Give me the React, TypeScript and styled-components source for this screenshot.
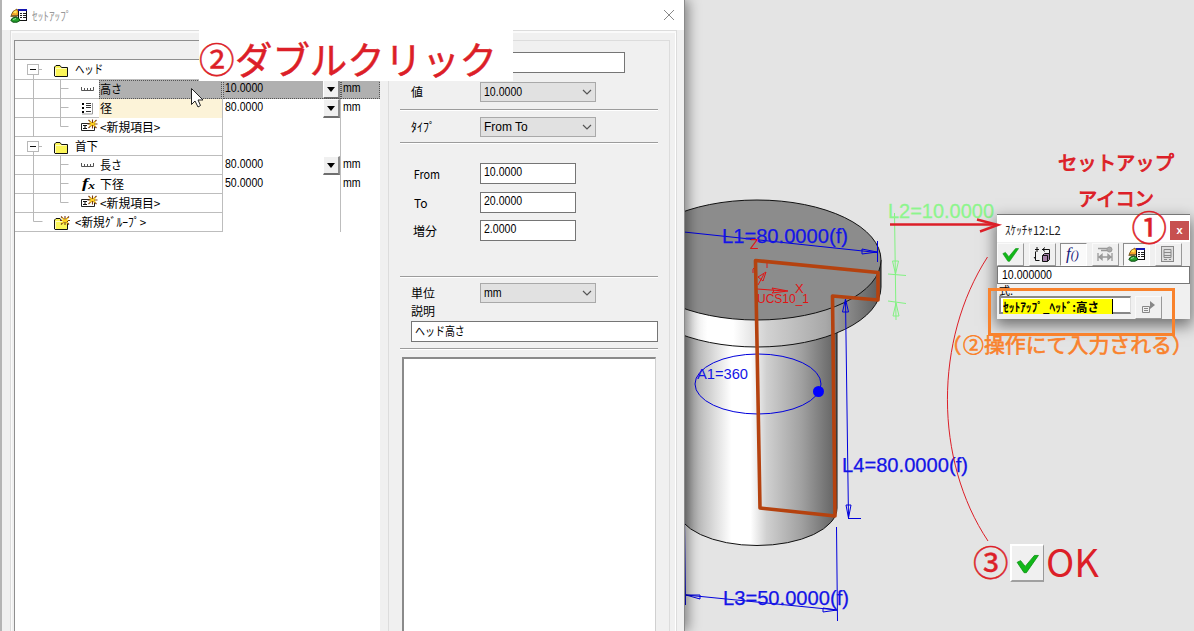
import React from "react";
import styled, { createGlobalStyle } from "styled-components";

const UI = `"Liberation Sans", "Noto Sans CJK JP", sans-serif`;
const JP = `"Noto Sans CJK JP", sans-serif`;
const RED = "#dc1f28";
const BLUE = "#1414e6";
const ORANGE = "#f9822c";

const GlobalStyle = createGlobalStyle`
  * { box-sizing: border-box; }
  body { margin: 0; font-family: ${UI}; font-size: 12px; color: #000; }
`;

const Desktop = styled.div`
  position: relative;
  display: flex;
  width: 1194px;
  height: 631px;
  overflow: hidden;
  background: #e4e4e4;
`;

const Dialog = styled.section`
  position: relative;
  z-index: 1;
  display: flex;
  flex-direction: column;
  flex: none;
  width: 685px;
  height: 631px;
  border-left: 2px solid #b4b4b4;
  border-right: 1px solid #8a8a8a;
  background: #f0f0f0;
  box-shadow: 3px 0 12px rgba(0, 0, 0, 0.45);
`;

const TitleBar = styled.header`
  display: flex;
  align-items: center;
  justify-content: space-between;
  flex: none;
  height: 30px;
  padding: 0 9px 0 8px;
  background: #fff;
`;

const TitleText = styled.div`
  display: flex;
  align-items: center;
  gap: 5px;
  color: #999;
`;

const Fit = styled.span<{ $scale?: number }>`
  display: inline-block;
  white-space: pre;
  transform: scaleX(${(p) => p.$scale ?? 1});
  transform-origin: left center;
`;

const Body = styled.div`
  display: flex;
  flex: 1;
  margin: 0 7px 0 8px;
  padding: 4px 0 0 3px;
  border: 1px solid #dcdcdc;
  border-bottom: 0;
  box-shadow: inset 1px 0 0 #fafafa, inset 0 2px 0 #fafafa, inset -1px 0 0 #fff;
`;

const TreePane = styled.div`
  display: flex;
  flex-direction: column;
  width: 366px;
  margin-top: 5px;
  border: 1px solid #8f8f8f;
  border-right: 0;
  border-bottom: 0;
  background: #fff;
`;

const TreeHeader = styled.div`
  height: 19px;
  border-bottom: 1px solid #8f8f8f;
  background: #f0f0f0;
`;

const TreeRow = styled.div<{ $first?: boolean }>`
  display: grid;
  grid-template-columns: 208px 118px 1fr;
  height: ${(p) => (p.$first ? 20 : 19)}px;
  border-bottom: 1px solid #bdbdbd;
`;

const NameCell = styled.div`
  display: flex;
  border-right: 1px solid #bdbdbd;
`;

const Cell = styled.div<{ $selected?: boolean; $last?: boolean }>`
  display: flex;
  justify-content: space-between;
  padding-left: 2px;
  line-height: 16px;
  border-right: ${(p) => (p.$last ? "0" : "1px solid #bdbdbd")};
  background: ${(p) => (p.$selected ? "#b0b0b0" : "#fff")};
  outline: ${(p) => (p.$selected ? "1px dotted #555" : "0")};
  outline-offset: -1px;
`;

const Label = styled.div<{ $fill?: string; $selected?: boolean }>`
  flex: 1;
  padding-left: 1px;
  font: 12px/17px ${JP};
  white-space: nowrap;
  background: ${(p) => p.$fill ?? "transparent"};
  outline: ${(p) => (p.$selected ? "1px dotted #555" : "0")};
  outline-offset: -1px;
`;

const DropButton = styled.button`
  display: grid;
  place-items: center;
  width: 17px;
  height: 19px;
  padding: 0;
  border: 1px solid #fff;
  border-right: 2px solid #8c8c8c;
  border-bottom: 2px solid #6e6e6e;
  background: #f0f0f0;
`;

const Group = styled.div`
  display: flex;
  flex-direction: column;
  width: 282px;
  margin: 5px 0 0 8px;
  padding-left: 11px;
  border: 1px solid #dcdcdc;
  border-bottom: 0;
`;

const Field = styled.div<{ $top: number; $inset?: number }>`
  display: grid;
  grid-template-columns: 69px auto;
  align-items: center;
  justify-content: start;
  margin-top: ${(p) => p.$top}px;
  padding-left: 11px;
  font: 12px/16px ${JP};
  > :first-child {
    padding-left: ${(p) => p.$inset ?? 0}px;
  }
`;

const Rule = styled.div<{ $top: number }>`
  flex: none;
  width: 258px;
  height: 2px;
  margin-top: ${(p) => p.$top}px;
  border-top: 1px solid #9c9c9c;
  background: #fff;
`;

const TextBox = styled.div<{ $width: number }>`
  width: ${(p) => p.$width}px;
  height: 21px;
  padding: 0 3px;
  border: 1px solid #757575;
  background: #fff;
  font: 12px/17px ${UI};
`;

const Select = styled.div`
  display: flex;
  align-items: center;
  justify-content: space-between;
  width: 116px;
  height: 20px;
  padding: 0 3px;
  border: 1px solid #a9a9a9;
  background: #e1e1e1;
  font: 12px/18px ${UI};
`;

const Caption = styled.div`
  height: 14px;
  margin-top: 1px;
  padding-left: 11px;
  font: 12px/14px ${JP};
`;

const Description = styled(TextBox)`
  margin: 3px 0 0 11px;
  font-family: ${JP};
  line-height: 17px;
`;

const ListBox = styled.div`
  flex: 1;
  width: 254px;
  margin: 7px 0 0 2px;
  border: 2px solid #8a8a8a;
  border-right: 1px solid #d0d0d0;
  border-bottom: 0;
  background: #fff;
`;

const Scene = styled.svg`
  position: absolute;
  inset: 0;
  font-family: ${UI};
`;

const Sketcher = styled.section`
  position: absolute;
  z-index: 1;
  left: 997px;
  top: 214px;
  display: flex;
  flex-direction: column;
  width: 193px;
  height: 105px;
  overflow: hidden;
  border-top: 1px solid #777;
  background: #f0f0f0;
`;

const SketcherShade = styled.div`
  position: absolute;
  left: 997px;
  top: 216px;
  width: 193px;
  height: 103px;
  box-shadow: 0 5px 14px 2px rgba(0, 0, 0, 0.5);
`;

const SketcherTitle = styled.header`
  display: flex;
  align-items: center;
  justify-content: space-between;
  height: 29px;
  padding: 4px 1px 0 8px;
  background: #fff;
  font: 12px/20px ${JP};
  color: #222;
`;

const CloseButton = styled.button`
  width: 19px;
  height: 19px;
  margin-top: 1px;
  padding: 0 0 2px;
  border: 0;
  background: #c75050;
  color: #fff;
  font: bold 11px/16px ${UI};
`;

const Tools = styled.div`
  display: flex;
  gap: 4.6px;
  height: 25px;
  padding: 1px 0 0;
`;

const Tool = styled.button<{ $pressed?: boolean }>`
  display: grid;
  place-items: center;
  width: 27px;
  height: 23px;
  padding: 0;
  border: 1px solid;
  border-color: ${(p) => (p.$pressed ? "#8c8c8c #fff #fff #8c8c8c" : "#fafafa #999 #999 #fafafa")};
  background: ${(p) => (p.$pressed ? "#fafafa" : "#f0f0f0")};
`;

const ValueBox = styled.div`
  height: 20px;
  padding: 0 4px;
  border: 1px solid #777;
  background: #fff;
  font: 12px/16px ${UI};
`;

const FormulaCaption = styled.div`
  height: 12px;
  padding: 0 2px;
  font: 11px/13px ${JP};
`;

const FormulaRow = styled.div`
  display: flex;
  gap: 4px;
  padding-left: 2px;
`;

const FormulaBox = styled.div`
  width: 132px;
  height: 18px;
  padding: 1px 2px;
  border: 2px solid #888;
  border-right: 1px solid #ddd;
  background: #fff;
  font: bold 12px/15px ${JP};
`;

const Marked = styled.div`
  width: 110px;
  height: 15px;
  border-right: 1px solid #000;
  background: #ffff00;
`;

const NoteBackdrop = styled.div`
  position: absolute;
  z-index: 2;
  left: 199px;
  top: 29px;
  width: 314px;
  height: 52px;
  background: #fff;
`;

const Notes = styled.svg`
  position: absolute;
  z-index: 3;
  inset: 0;
  font-family: ${JP};
`;

const OkButton = styled.div`
  position: absolute;
  z-index: 2;
  left: 1010px;
  top: 544px;
  display: grid;
  place-items: center;
  width: 34px;
  height: 38px;
  border: 2px solid #fff;
  border-right: 1px solid #999;
  border-bottom: 2px solid #a0a0a0;
  background: #f0f0f0;
`;

const SetupIcon = ({ w = 17, h = 15 }: { w?: number; h?: number }) => (
  <svg width={w} height={h} viewBox="0 0 17 15">
    <path d="M0.5 8.5h7M1 7.5 3 3.5 7 1l2 3.5-1 3z" fill="#f5a52a" stroke="#6b4a10" strokeWidth=".8" />
    <path d="M3 4.5l2-2 2 1-1 2z" fill="#ffe95a" />
    <rect x="8.5" y="1.5" width="8" height="11" fill="#fff" stroke="#111" />
    <path d="M8 2h9" stroke="#1616b0" strokeWidth="2" />
    <path d="M10 5.5h2M13 5.5h3M10 7.5h2M13 7.5h3M10 9.5h2M13 9.5h3" stroke="#222" />
    <path d="M.8 12.5 2.5 10 6 9l3 1.5 1 2-3 1.7H3z" fill="#25a02c" stroke="#0a4c10" />
    <path d="M3 11.5l3-1" stroke="#9fe39a" />
  </svg>
);

const FolderIcon = ({ star }: { star?: boolean }) => (
  <svg width="18" height="15" viewBox="0 0 18 15">
    <path d="M1.5 13V4L3 2.5h4L8.500 4.500H14.500V13.500H2z" fill="#fbf558" stroke="#111" />
    <path d="M2.500 13V5.500H13.500" fill="none" stroke="#fffcc0" />
    {star && <Spark x={12} y={4.5} />}
  </svg>
);

const Spark = ({ x, y }: { x: number; y: number }) => (
  <g transform={`translate(${x} ${y})`}>
    <path d="M-4-4 4 4M4-4-4 4M0-4.500V4.500M-5 0H5" stroke="#7a3b10" strokeWidth="1.100" />
    <path d="M-3-2.500 3 2.500M3-2.500-3 2.500M-3 0H3" stroke="#ffd21e" strokeWidth="1.200" />
  </g>
);

const ItemIcon = ({ kind }: { kind: string }) => (
  <svg width="20" height="18" viewBox="0 0 20 18">
    {kind === "ruler" && <path d="M2.500 7v3.500H14.500V7M5.500 8v2M8.500 8v2M11.500 8v2" fill="none" stroke="#555" />}
    {kind === "list" && (
      <>
        <path d="M3 5h2M3 9h2M3 13h2" stroke="#000" strokeWidth="2" />
        <path d="M7 4.500h5M7 6.500h5M7 8.500h5M7 12.500h5" stroke="#333" />
        <path d="M13.500 4v11H3" fill="none" stroke="#999" />
      </>
    )}
    {kind === "fx" && (
      <text x="3" y="13" fontFamily="Liberation Serif, serif" fontStyle="italic" fontWeight="bold" fontSize="14" textLength="13" lengthAdjust="spacingAndGlyphs">
        f<tspan fontSize="10" dy="1">x</tspan>
      </text>
    )}
    {kind === "new" && (
      <>
        <path d="M2.500 5.500H15.500V12.500H2.500z" fill="#fff" stroke="#222" />
        <path d="M4 7.500h4M6 7.500v3M4 10.500h4" stroke="#111" />
        <Spark x={13.5} y={6} />
      </>
    )}
  </svg>
);

const Check = ({ size = 18 }: { size?: number }) => (
  <svg width={size} height={size} viewBox="0 0 20 20">
    <path d="M1 9l3-1.500 4 5L16 3h3.500L9 18H7z" fill="#10b818" stroke="#0b9010" strokeWidth=".7" />
  </svg>
);

const Guide = ({ kind }: { kind: "group" | "item" | "last" | "end"; }) => (
  <svg width={kind === "group" || kind === "end" ? 38 : 64} height="19" viewBox={`0 0 ${kind === "group" || kind === "end" ? 38 : 64} 19`}>
    <g fill="none" stroke="#b8b8b8">
      {kind === "group" && (
        <>
          <path d="M18.500 15v4M24 9.500h3" />
          <rect x="12.500" y="4.500" width="11" height="10" />
          <path d="M15 9.500h6" stroke="#111" />
        </>
      )}
      {kind === "item" && <path d="M18.500 0v19M45.500 0v19M45.500 8.500h8" />}
      {kind === "last" && <path d="M18.500 0v19M45.500 0v8.500h8" />}
      {kind === "end" && <path d="M18.500 0v8.500h9" />}
    </g>
  </svg>
);

const Chevron = () => (
  <svg width="10" height="6" viewBox="0 0 10 6">
    <path d="M1 1l4 4 4-4" fill="none" stroke="#555" strokeWidth="1.200" />
  </svg>
);

type Row = { guide: "group" | "item" | "last" | "end"; icon: string; label: string; value?: string; drop?: boolean; fill?: string; selected?: boolean; scale?: number };

const rows: Row[] = [
  { guide: "group", icon: "folder", label: "ヘッド", scale: 0.78 },
  { guide: "item", icon: "ruler", label: "高さ", value: "10.0000", drop: true, fill: "#b0b0b0", selected: true, scale: 0.92 },
  { guide: "item", icon: "list", label: "径", value: "80.0000", drop: true, fill: "#fcf3d8" },
  { guide: "last", icon: "new", label: "<新規項目>", scale: 0.985 },
  { guide: "group", icon: "folder", label: "首下", scale: 0.96 },
  { guide: "item", icon: "ruler", label: "長さ", value: "80.0000", drop: true, scale: 0.92 },
  { guide: "item", icon: "fx", label: "下径", value: "50.0000" },
  { guide: "last", icon: "new", label: "<新規項目>", scale: 0.985 },
  { guide: "end", icon: "newFolder", label: "<新規グループ>", scale: 0.97 },
];

const halfWidth: Record<string, string> = { "<新規グループ>": "<新規ｸﾞﾙｰﾌﾟ>" };

function SetupTree() {
  return (
    <TreePane>
      <TreeHeader />
      {rows.map((r, i) => (
        <TreeRow key={i} $first={i === 0}>
          <NameCell>
            <Guide kind={r.guide} />
            {r.icon === "folder" || r.icon === "newFolder" ? (
              <svg width="21" height="18" viewBox="0 -3 21 18">
                <FolderIcon star={r.icon === "newFolder"} />
              </svg>
            ) : (
              <ItemIcon kind={r.icon} />
            )}
            <Label $fill={r.fill} $selected={r.selected}>
              <Fit $scale={r.scale}>{halfWidth[r.label] ?? r.label}</Fit>
            </Label>
          </NameCell>
          <Cell $selected={r.selected}>
            <Fit $scale={0.88}>{r.value ?? ""}</Fit>
            {r.drop && (
              <DropButton>
                <svg width="8" height="5" viewBox="0 0 8 5">
                  <path d="M0 0h8L4 5z" />
                </svg>
              </DropButton>
            )}
          </Cell>
          <Cell $selected={r.selected} $last>
            <Fit $scale={0.88}>{r.value ? "mm" : ""}</Fit>
          </Cell>
        </TreeRow>
      ))}
    </TreePane>
  );
}

function PropertyForm() {
  return (
    <Group>
      <Field $top={11}>
        <span />
        <TextBox $width={145} />
      </Field>
      <Field $top={9}>
        <span>値</span>
        <Select><Fit $scale={0.88}>10.0000</Fit><Chevron /></Select>
      </Field>
      <Rule $top={7} />
      <Field $top={6}>
        <span>ﾀｲﾌﾟ</span>
        <Select><Fit>From To</Fit><Chevron /></Select>
      </Field>
      <Rule $top={5} />
      <Field $top={19} $inset={3}>
        <Fit $scale={0.9}>From</Fit>
        <TextBox $width={96}><Fit $scale={0.88}>10.0000</Fit></TextBox>
      </Field>
      <Field $top={8} $inset={3}>
        <span>To</span>
        <TextBox $width={96}><Fit $scale={0.88}>20.0000</Fit></TextBox>
      </Field>
      <Field $top={7} $inset={2}>
        <span>増分</span>
        <TextBox $width={96}><Fit $scale={0.88}>2.0000</Fit></TextBox>
      </Field>
      <Rule $top={35} />
      <Field $top={5}>
        <span>単位</span>
        <Select><Fit $scale={0.88}>mm</Fit><Chevron /></Select>
      </Field>
      <Caption>説明</Caption>
      <Description $width={247}><Fit $scale={0.83}>ヘッド高さ</Fit></Description>
      <Rule $top={6} />
      <ListBox />
    </Group>
  );
}

function Model() {
  const fit = { lengthAdjust: "spacingAndGlyphs" as const };
  return (
    <Scene width="1194" height="631" viewBox="0 0 1194 631">
      <defs>
        <linearGradient id="shaft" gradientUnits="userSpaceOnUse" x1="677" x2="837" y1="0" y2="0">
          <stop offset="0" stopColor="#808080" />
          <stop offset=".1" stopColor="#adadad" />
          <stop offset=".24" stopColor="#dedede" />
          <stop offset=".34" stopColor="#fff" />
          <stop offset=".46" stopColor="#fff" />
          <stop offset=".56" stopColor="#d0d0d0" />
          <stop offset=".78" stopColor="#a0a0a0" />
          <stop offset="1" stopColor="#606060" />
        </linearGradient>
        <linearGradient id="rim" gradientUnits="userSpaceOnUse" x1="684" x2="881" y1="0" y2="0">
          <stop offset="0" stopColor="#e0e0e0" />
          <stop offset=".12" stopColor="#fff" />
          <stop offset=".25" stopColor="#fff" />
          <stop offset=".42" stopColor="#d2d2d2" />
          <stop offset=".72" stopColor="#a8a8a8" />
          <stop offset=".9" stopColor="#777" />
          <stop offset="1" stopColor="#5c5c5c" />
        </linearGradient>
      </defs>
      <path d="M677 310V508A80 37.500 0 0 0 837 508V310z" fill="url(#shaft)" stroke="#111" />
      <path d="M633 260V287A124 60 0 0 0 881 287V260z" fill="url(#rim)" stroke="#111" />
      <ellipse cx="757" cy="260" rx="124" ry="60" fill="#8c8c8c" stroke="#111" />
      <g fill="none" stroke="#0000dc">
        <path d="M684 232 877 252.500M877.500 241v21M877 252l-15-3v5z" />
        <ellipse cx="758" cy="384" rx="63" ry="30" />
        <path d="M845.500 300 848.500 518M845.500 299l-3 13h6zM848.500 518l-2.500-13h5zM848 518.500h13" />
        <path d="M684.500 519 685.500 605M836.500 527 837.500 621M686 595 837 610M686 595l14 0v4zM837 610l-14-2v4z" />
      </g>
      <circle cx="818.500" cy="391.500" r="5.500" fill="#0000ff" />
      <g fill={BLUE} stroke={BLUE} strokeWidth=".25" fontSize="20">
        <text x="722" y="243" textLength="126" {...fit}>L1=80.0000(f)</text>
        <text x="842" y="472" textLength="126" {...fit}>L4=80.0000(f)</text>
        <text x="723" y="605" textLength="126" {...fit}>L3=50.0000(f)</text>
        <text x="697" y="379" fontSize="15" strokeWidth="0" textLength="51" {...fit}>A1=360</text>
      </g>
      <g fill="none" stroke="#e01414">
        <path d="M757 289 785 291M788 291l-16-3 2 3-2 2zM758 285l6-11M766 272l-8 5 5 4zM753 273q-1-5 2-6M767 268v-5" />
      </g>
      <g fill="#e01414" fontSize="13">
        <text x="750" y="249" fontSize="14">Z</text>
        <text x="795" y="293">X</text>
        <text x="757" y="303" textLength="52" {...fit}>UCS10_1</text>
      </g>
      <path d="M755.500 260.500 878 272.500V300L832.500 296 835 516 760 508z" fill="none" stroke="#b5420f" strokeWidth="3.600" strokeLinejoin="round" />
      <g fill="none" stroke="#82f282">
        <path d="M894.500 213 896 320M895.500 274l-3-13h6zM896 303l-3 13h6zM888 274l18 1.500M888 301l18 2.500" />
      </g>
      <text x="888" y="218" fontSize="20" fill="#8df58d" stroke="#8df58d" strokeWidth=".3" textLength="106" {...fit}>L2=10.0000</text>
    </Scene>
  );
}

function SketcherWindow() {
  return (
    <Sketcher>
      <SketcherTitle>
        <Fit $scale={0.93}>ｽｹｯﾁｬ12:L2</Fit>
        <CloseButton>x</CloseButton>
      </SketcherTitle>
      <Tools>
        <Tool><Check size={17} /></Tool>
        <Tool>
          <svg width="18" height="17" viewBox="0 0 18 17" fill="none" stroke="#111">
            <path d="M2 3.500h4M4 1v5M2.500 5.500v9h4M9 3.500h7.500v4M1 11l1.500 2M12 1.500 9.500 3.500 12 5.500" />
            <path d="M9.500 9.500l2-2h5v6l-2 2h-5zM9.500 9.500h5v6" fill="#a580a8" />
          </svg>
        </Tool>
        <Tool $pressed>
          <svg width="20" height="18" viewBox="0 0 20 18">
            <text x="2" y="14" fill="#171779" fontFamily="Liberation Serif, serif" fontStyle="italic" fontSize="17">
              f<tspan fontSize="12">()</tspan>
            </text>
          </svg>
        </Tool>
        <Tool>
          <svg width="18" height="16" viewBox="0 0 18 16" fill="none" stroke="#999">
            <path d="M2 2.500h9M5 4.500h6" strokeWidth="1.500" />
            <circle cx="13.500" cy="3.500" r="2.500" fill="#aaa" />
            <path d="M2 7v8M16 7v8M3 11h12M6 8.500 3 11l3 2.500zM12 8.500 15 11l-3 2.500z" strokeWidth="1.300" />
          </svg>
        </Tool>
        <Tool $pressed><SetupIcon /></Tool>
        <Tool>
          <svg width="16" height="18" viewBox="0 0 16 18" fill="none" stroke="#888">
            <rect x="1.500" y="1.500" width="12" height="15" fill="#ddd" />
            <path d="M4 4.500h7v8H4zM4 7.500h7M4 10.500h7M4 14.500h3M9 14.500h2" />
          </svg>
        </Tool>
      </Tools>
      <ValueBox><Fit $scale={0.88}>10.000000</Fit></ValueBox>
      <FormulaCaption>式:</FormulaCaption>
      <FormulaRow>
        <FormulaBox>
          <Marked><Fit $scale={0.952}>ｾｯﾄｱｯﾌﾟ_ﾍｯﾄﾞ:高さ</Fit></Marked>
        </FormulaBox>
        <Tool>
          <svg width="15" height="14" viewBox="0 0 15 14">
            <path d="M1.500 5.500h7v6h-7zM3 7.500h4M3 9.500h4" fill="none" stroke="#888" />
            <path d="M9 0l5 4-5 4z" fill="#888" />
          </svg>
        </Tool>
      </FormulaRow>
    </Sketcher>
  );
}

function Annotations() {
  const fit = { lengthAdjust: "spacingAndGlyphs" as const };
  return (
    <Notes width="1194" height="631" viewBox="0 0 1194 631">
      <g fill={RED} stroke={RED} strokeWidth=".5">
        <text x="199" y="72.500" fontSize="35.500">②</text>
        <text x="235" y="74" fontSize="38" textLength="262" {...fit}>ダブルクリック</text>
        <text x="1058" y="169.500" fontSize="19.500" strokeWidth=".9" textLength="116" {...fit}>セットアップ</text>
        <text x="1078" y="205.500" fontSize="19.500" strokeWidth=".9" textLength="76" {...fit}>アイコン</text>
        <text x="1131.500" y="241" fontSize="35.500">①</text>
        <text x="973" y="576" fontSize="35.500">③</text>
        <text x="1046" y="577" fontSize="38" strokeWidth="0" textLength="53" {...fit}>OK</text>
      </g>
      <path d="M987.500 257C934 340 934 460 988 541" fill="none" stroke={RED} />
      <path d="M890 224.500H996" stroke={RED} strokeWidth="2.600" />
      <path d="M977 219.500 998 225 980 231.500" fill="none" stroke={RED} strokeWidth="2.400" />
      <rect x="989.500" y="289.500" width="184" height="45" fill="none" stroke={ORANGE} strokeWidth="3" />
      <g fill={ORANGE} stroke={ORANGE} strokeWidth=".6" fontSize="20.500">
        <text x="941" y="353">（</text>
        <text x="963" y="353" textLength="209" {...fit}>②操作にて入力される</text>
        <text x="1172" y="353">）</text>
      </g>
      <path d="M191.500 88.500v16l3.500-3.500 3 6 2.500-1.500-2.500-5.500h5z" fill="#fff" stroke="#222" />
    </Notes>
  );
}

export default function App() {
  return (
    <>
      <GlobalStyle />
      <Desktop>
        <Model />
        <Dialog>
          <TitleBar>
            <TitleText>
              <SetupIcon />
              <Fit $scale={0.94}>ｾｯﾄｱｯﾌﾟ</Fit>
            </TitleText>
            <svg width="12" height="12" viewBox="0 0 12 12">
              <path d="M1 1l10 10M11 1 1 11" stroke="#888" />
            </svg>
          </TitleBar>
          <Body>
            <SetupTree />
            <PropertyForm />
          </Body>
        </Dialog>
        <SketcherShade />
        <SketcherWindow />
        <NoteBackdrop />
        <OkButton><Check size={23} /></OkButton>
        <Annotations />
      </Desktop>
    </>
  );
}
